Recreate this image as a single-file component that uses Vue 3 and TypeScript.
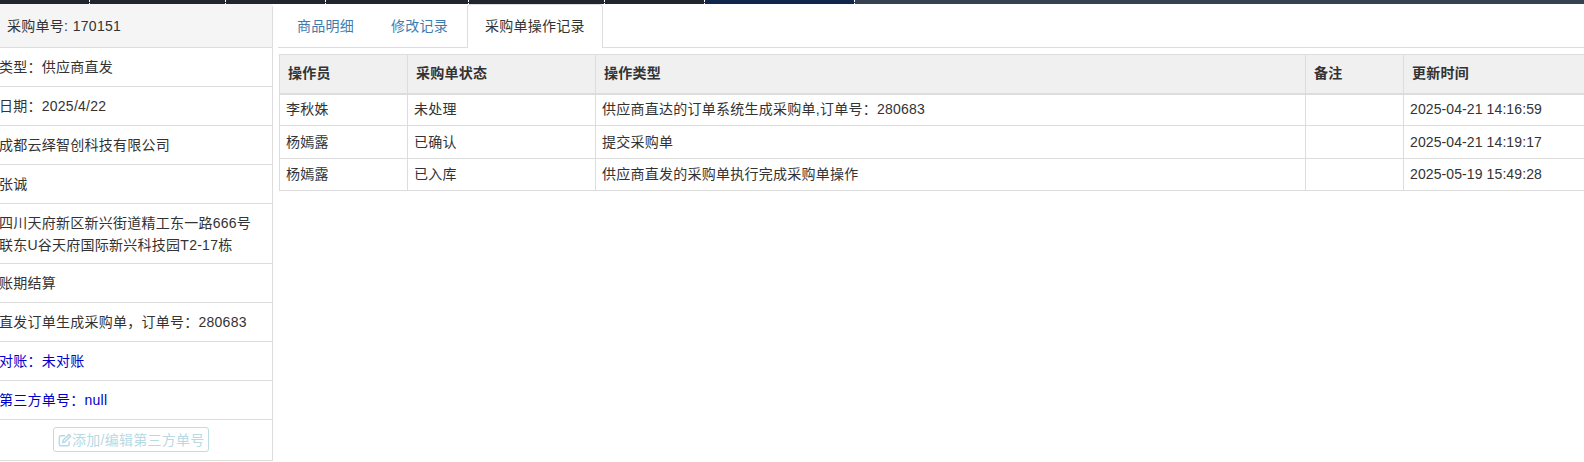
<script setup lang="ts">
interface InfoRow { lines: string[]; blue?: boolean; multi?: boolean }
const COLON = '\uFF1A'
const COMMA = '\uFF0C'
const rows: InfoRow[] = [
  { lines: [`类型${COLON}供应商直发`] },
  { lines: [`日期${COLON}2025/4/22`] },
  { lines: ['成都云绎智创科技有限公司'] },
  { lines: ['张诚'] },
  { lines: ['四川天府新区新兴街道精工东一路666号', '联东U谷天府国际新兴科技园T2-17栋'], multi: true },
  { lines: ['账期结算'] },
  { lines: [`直发订单生成采购单${COMMA}订单号${COLON}280683`] },
  { lines: [`对账${COLON}未对账`], blue: true },
  { lines: [`第三方单号${COLON}null`], blue: true },
]
const tabs = [
  { label: '商品明细', active: false },
  { label: '修改记录', active: false },
  { label: '采购单操作记录', active: true },
]
const columns = [
  { label: '操作员', width: 128 },
  { label: '采购单状态', width: 188 },
  { label: '操作类型', width: 710 },
  { label: '备注', width: 98 },
  { label: '更新时间', width: 200 },
]
const records = [
  ['李秋姝', '未处理', `供应商直达的订单系统生成采购单,订单号${COLON}280683`, '', '2025-04-21 14:16:59'],
  ['杨嫣露', '已确认', '提交采购单', '', '2025-04-21 14:19:17'],
  ['杨嫣露', '已入库', '供应商直发的采购单执行完成采购单操作', '', '2025-05-19 15:49:28'],
]
const barSegments = [
  { width: 90, color: '#21262c' },
  { width: 136, color: '#21262c' },
  { width: 100, color: '#21262c' },
  { width: 143, color: '#21262c' },
  { width: 136, color: '#21262c' },
  { width: 100, color: '#21262c' },
  { width: 150, color: '#10264d' },
]
</script>

<template>
  <div class="page">
    <div class="topbar">
      <span
        v-for="(s, i) in barSegments"
        :key="i"
        class="seg"
        :style="{ width: s.width + 'px', background: s.color }"
      ></span>
    </div>
    <div class="body">
      <aside class="panel">
        <div class="panel-head">采购单号: 170151</div>
        <div v-for="(r, i) in rows" :key="i" class="item" :class="{ blue: r.blue, multi: r.multi }">
          <div v-for="l in r.lines" :key="l">{{ l }}</div>
        </div>
        <div class="item action">
          <button class="btn" type="button" disabled>
            <svg class="icon" viewBox="0 0 15 15" width="14" height="14" fill="none" stroke="currentColor" stroke-width="1.6">
              <path d="M12 9v3a1.6 1.6 0 0 1-1.6 1.6H3A1.6 1.6 0 0 1 1.4 12V4.6A1.6 1.6 0 0 1 3 3h4.6" />
              <path d="M5.6 7.8 11.6 1.8l1.8 1.8-6 6-2.3.5z" />
            </svg>添加/编辑第三方单号
          </button>
        </div>
      </aside>
      <main class="main">
        <nav class="tabs">
          <a v-for="t in tabs" :key="t.label" class="tab" :class="{ active: t.active }">{{ t.label }}</a>
        </nav>
        <table class="table">
          <colgroup>
            <col v-for="c in columns" :key="c.label" :style="{ width: c.width + 'px' }" />
          </colgroup>
          <thead>
            <tr>
              <th v-for="c in columns" :key="c.label">{{ c.label }}</th>
            </tr>
          </thead>
          <tbody>
            <tr v-for="(rec, i) in records" :key="i" :class="{ tall: i === 1 }">
              <td v-for="(v, j) in rec" :key="j" :class="{ time: j === 4 }">{{ v }}</td>
            </tr>
          </tbody>
        </table>
      </main>
    </div>
  </div>
</template>

<style>
html, body { margin: 0; background: #fff; overflow: hidden; }
</style>

<style scoped>
.page {
  width: 1584px;
  height: 462px;
  overflow: hidden;
  font-family: "Liberation Sans", "Noto Sans CJK SC", sans-serif;
  font-size: 14px;
  line-height: 20px;
  letter-spacing: 0.25px;
  color: #333;
}
.topbar {
  display: flex;
  height: 4px;
  background: #36424f;
}
.seg {
  display: block;
  box-sizing: border-box;
  height: 4px;
  border-right: 1px dotted #fff;
}
.body { display: flex; }
.panel {
  width: 272px;
  flex: none;
  border-right: 1px solid #ddd;
  box-sizing: content-box;
  border-top-right-radius: 4px;
}
.panel-head {
  box-sizing: border-box;
  height: 44px;
  padding: 12px 0 0 7px;
  background: #f5f5f5;
  border-bottom: 1px solid #ddd;
  border-top-right-radius: 4px;
  word-spacing: 0.5px;
}
.item {
  padding: 9px 0;
  border-bottom: 1px solid #ddd;
  white-space: nowrap;
  margin-left: -1px;
}
.item.multi {
  padding: 8px 0 7px;
  line-height: 22px;
}
.item.blue { color: #0000cc; }
.action {
  display: flex;
  padding: 7px 0 8px;
  margin-left: 0;
}
.btn {
  display: inline-flex;
  align-items: center;
  box-sizing: border-box;
  width: 156px;
  height: 25px;
  margin-left: 53px;
  padding: 0 0 0 4px;
  font: inherit;
  letter-spacing: inherit;
  white-space: nowrap;
  color: #b7dae4;
  background: #fff;
  border: 1px solid #bcdde6;
  border-radius: 3px;
}
.icon { flex: none; }
.main {
  margin-left: 4px;
  flex: 1;
  min-width: 0;
  overflow: hidden;
}
.tabs {
  display: flex;
  height: 43px;
  margin-left: 1px;
  border-bottom: 1px solid #ddd;
}
.tab {
  box-sizing: content-box;
  height: 42px;
  padding: 0 17px 0 18px;
  line-height: 43px;
  color: #3f7cad;
  border: 1px solid transparent;
  border-bottom: none;
  border-radius: 4px 4px 0 0;
}
.tab.active {
  height: 43px;
  margin-left: 1px;
  padding: 0 17px;
  color: #333;
  background: #fff;
  border-color: #ddd;
}
.table {
  margin: 6px 0 0 2px;
  border-collapse: collapse;
  table-layout: fixed;
  width: 1324px;
}
th, td {
  border: 1px solid #ddd;
  text-align: left;
  box-sizing: border-box;
}
th {
  height: 39px;
  padding: 0 8px 2px;
  font-weight: 700;
  background: #f0f0f0;
  border-bottom-width: 2px;
}
td {
  height: 32px;
  padding: 0 6px 1px;
}
td.time { letter-spacing: 0.1px; }
.tall td { height: 33px; }
</style>
